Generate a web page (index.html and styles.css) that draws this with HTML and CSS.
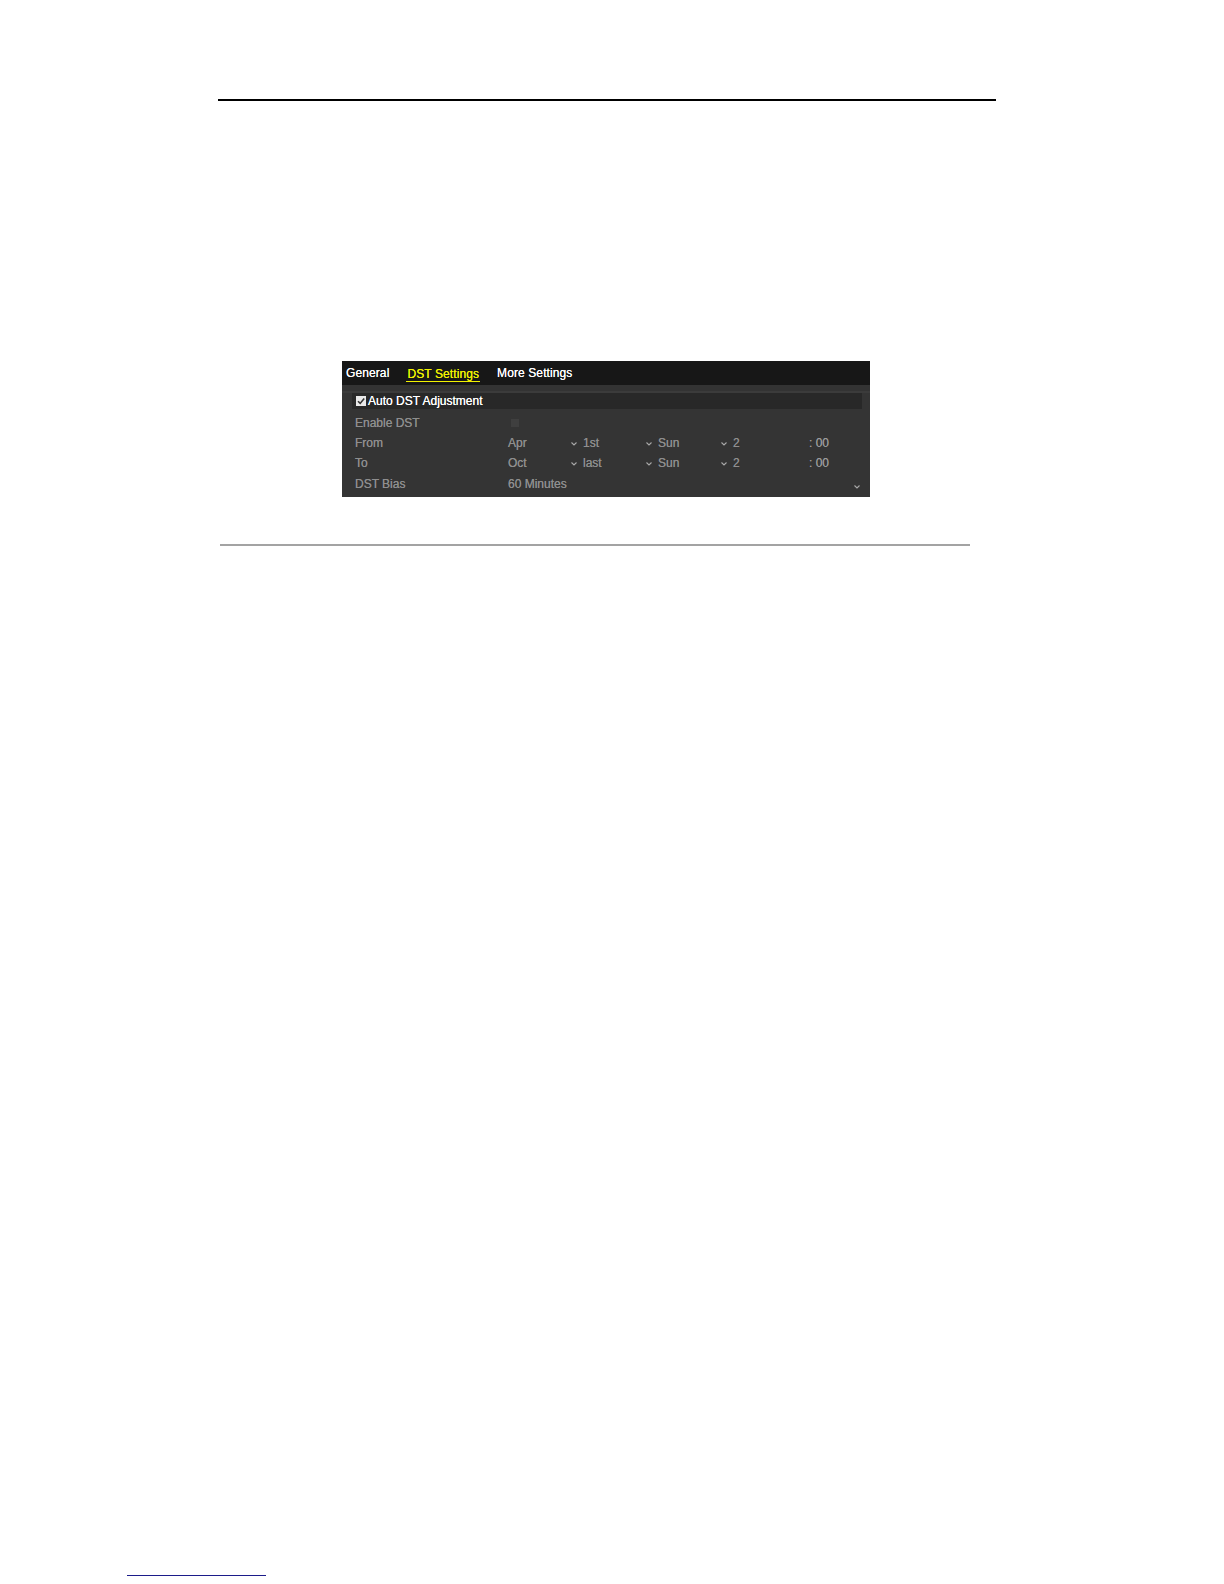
FILE: index.html
```html
<!DOCTYPE html>
<html>
<head>
<meta charset="utf-8">
<link rel="stylesheet" href="styles.css">
</head>
<body>
<div class="page">
  <div class="top-rule"></div>
  <div class="panel">
    <div class="tabs">
      <span class="tab">General</span>
      <span class="tab active">DST Settings</span>
      <span class="tab">More Settings</span>
    </div>
    <div class="gap-band"></div>
    <div class="auto-row">
      <span class="check"><svg width="10" height="10" viewBox="0 0 10 10"><rect x="0" y="0" width="10" height="10" fill="#e8e8e8"/><path d="M2 5.2 L4.2 7.4 L8.2 2.6" stroke="#333" stroke-width="1.6" fill="none"/></svg></span>
      <span class="auto-label">Auto DST Adjustment</span>
    </div>
    <div class="rows">
      <div class="row">
        <span class="label">Enable DST</span>
        <span class="mini-check"></span>
      </div>
      <div class="row">
        <span class="label">From</span>
        <span class="sel">Apr<svg class="chev" width="6" height="4" viewBox="0 0 6 4"><path d="M0.5 0.5 L3 3 L5.5 0.5" stroke="#a8a8a8" stroke-width="1.1" fill="none"/></svg></span>
        <span class="sel">1st<svg class="chev" width="6" height="4" viewBox="0 0 6 4"><path d="M0.5 0.5 L3 3 L5.5 0.5" stroke="#a8a8a8" stroke-width="1.1" fill="none"/></svg></span>
        <span class="sel">Sun<svg class="chev" width="6" height="4" viewBox="0 0 6 4"><path d="M0.5 0.5 L3 3 L5.5 0.5" stroke="#a8a8a8" stroke-width="1.1" fill="none"/></svg></span>
        <span class="sel">2</span>
        <span class="min">: 00</span>
      </div>
      <div class="row">
        <span class="label">To</span>
        <span class="sel">Oct<svg class="chev" width="6" height="4" viewBox="0 0 6 4"><path d="M0.5 0.5 L3 3 L5.5 0.5" stroke="#a8a8a8" stroke-width="1.1" fill="none"/></svg></span>
        <span class="sel">last<svg class="chev" width="6" height="4" viewBox="0 0 6 4"><path d="M0.5 0.5 L3 3 L5.5 0.5" stroke="#a8a8a8" stroke-width="1.1" fill="none"/></svg></span>
        <span class="sel">Sun<svg class="chev" width="6" height="4" viewBox="0 0 6 4"><path d="M0.5 0.5 L3 3 L5.5 0.5" stroke="#a8a8a8" stroke-width="1.1" fill="none"/></svg></span>
        <span class="sel">2</span>
        <span class="min">: 00</span>
      </div>
      <div class="row">
        <span class="label">DST Bias</span>
        <span class="wide">60 Minutes<svg class="chev" width="6" height="4" viewBox="0 0 6 4"><path d="M0.5 0.5 L3 3 L5.5 0.5" stroke="#a8a8a8" stroke-width="1.1" fill="none"/></svg></span>
      </div>
    </div>
  </div>
  <div class="gray-rule"></div>
  <div class="blue-rule"></div>
</div>
</body>
</html>
```
FILE: styles.css
```css
html, body {
  margin: 0;
  padding: 0;
  background: #ffffff;
}
.page {
  width: 1224px;
  height: 1584px;
  position: relative;
  font-family: "Liberation Sans", Arial, sans-serif;
}
.top-rule {
  margin-left: 218px;
  width: 778px;
  height: 2px;
  background: #000;
  position: relative;
  top: 99px;
}
.panel {
  margin-top: 359px;
  margin-left: 342px;
  width: 528px;
  height: 136px;
  background: #343434;
  display: flex;
  flex-direction: column;
  overflow: hidden;
}
.tabs {
  height: 24px;
  background: #171717;
  display: flex;
  align-items: center;
  font-size: 12px;
  color: #ffffff;
  padding-left: 4px;
  text-shadow: 0 0 0.6px #ffffff;
}
.tab {
  margin-right: 17px;
  line-height: 14px;
  letter-spacing: 0.1px;
}
.tab.active {
  color: #f2f200;
  text-shadow: 0 0 0.6px #f2f200;
  border-bottom: 1px solid #f2f200;
  margin-top: 2px;
  padding: 0 1px;
}
.gap-band {
  height: 6px;
  background: #333333;
  border-bottom: 2px solid #3b3b3b;
}
.auto-row {
  height: 16px;
  margin: 0 8px 0 10px;
  background: #282828;
  display: flex;
  align-items: center;
  padding-left: 4px;
  color: #ffffff;
  font-size: 12px;
  text-shadow: 0 0 0.6px #ffffff;
}
.check {
  width: 10px;
  height: 10px;
  display: flex;
  margin-right: 2px;
}
.rows {
  display: flex;
  flex-direction: column;
  padding-top: 3.5px;
}
.row {
  height: 20.3px;
  display: flex;
  align-items: center;
  font-size: 12px;
  color: #8e8e8e;
  text-shadow: 0 0 0.5px #8e8e8e;
}
.label {
  width: 166px;
  padding-left: 13px;
  box-sizing: border-box;
  flex: none;
}
.mini-check {
  width: 8px;
  height: 8px;
  background: #3f3f3f;
  margin-left: 3px;
}
.sel {
  width: 75px;
  flex: none;
  position: relative;
}
.chev {
  position: absolute;
  left: 63px;
  top: 6px;
}
.min {
  margin-left: 1px;
  color: #9a9a9a;
}
.wide {
  width: 354px;
  flex: none;
  position: relative;
}
.wide .chev {
  left: auto;
  right: 2px;
  top: 8px;
}
.gray-rule {
  margin-top: 47px;
  margin-left: 220px;
  width: 750px;
  height: 2px;
  background: #a3a3a3;
}
.blue-rule {
  position: absolute;
  left: 127px;
  top: 1575px;
  width: 139px;
  height: 1px;
  background: #1c1c8a;
}
```
